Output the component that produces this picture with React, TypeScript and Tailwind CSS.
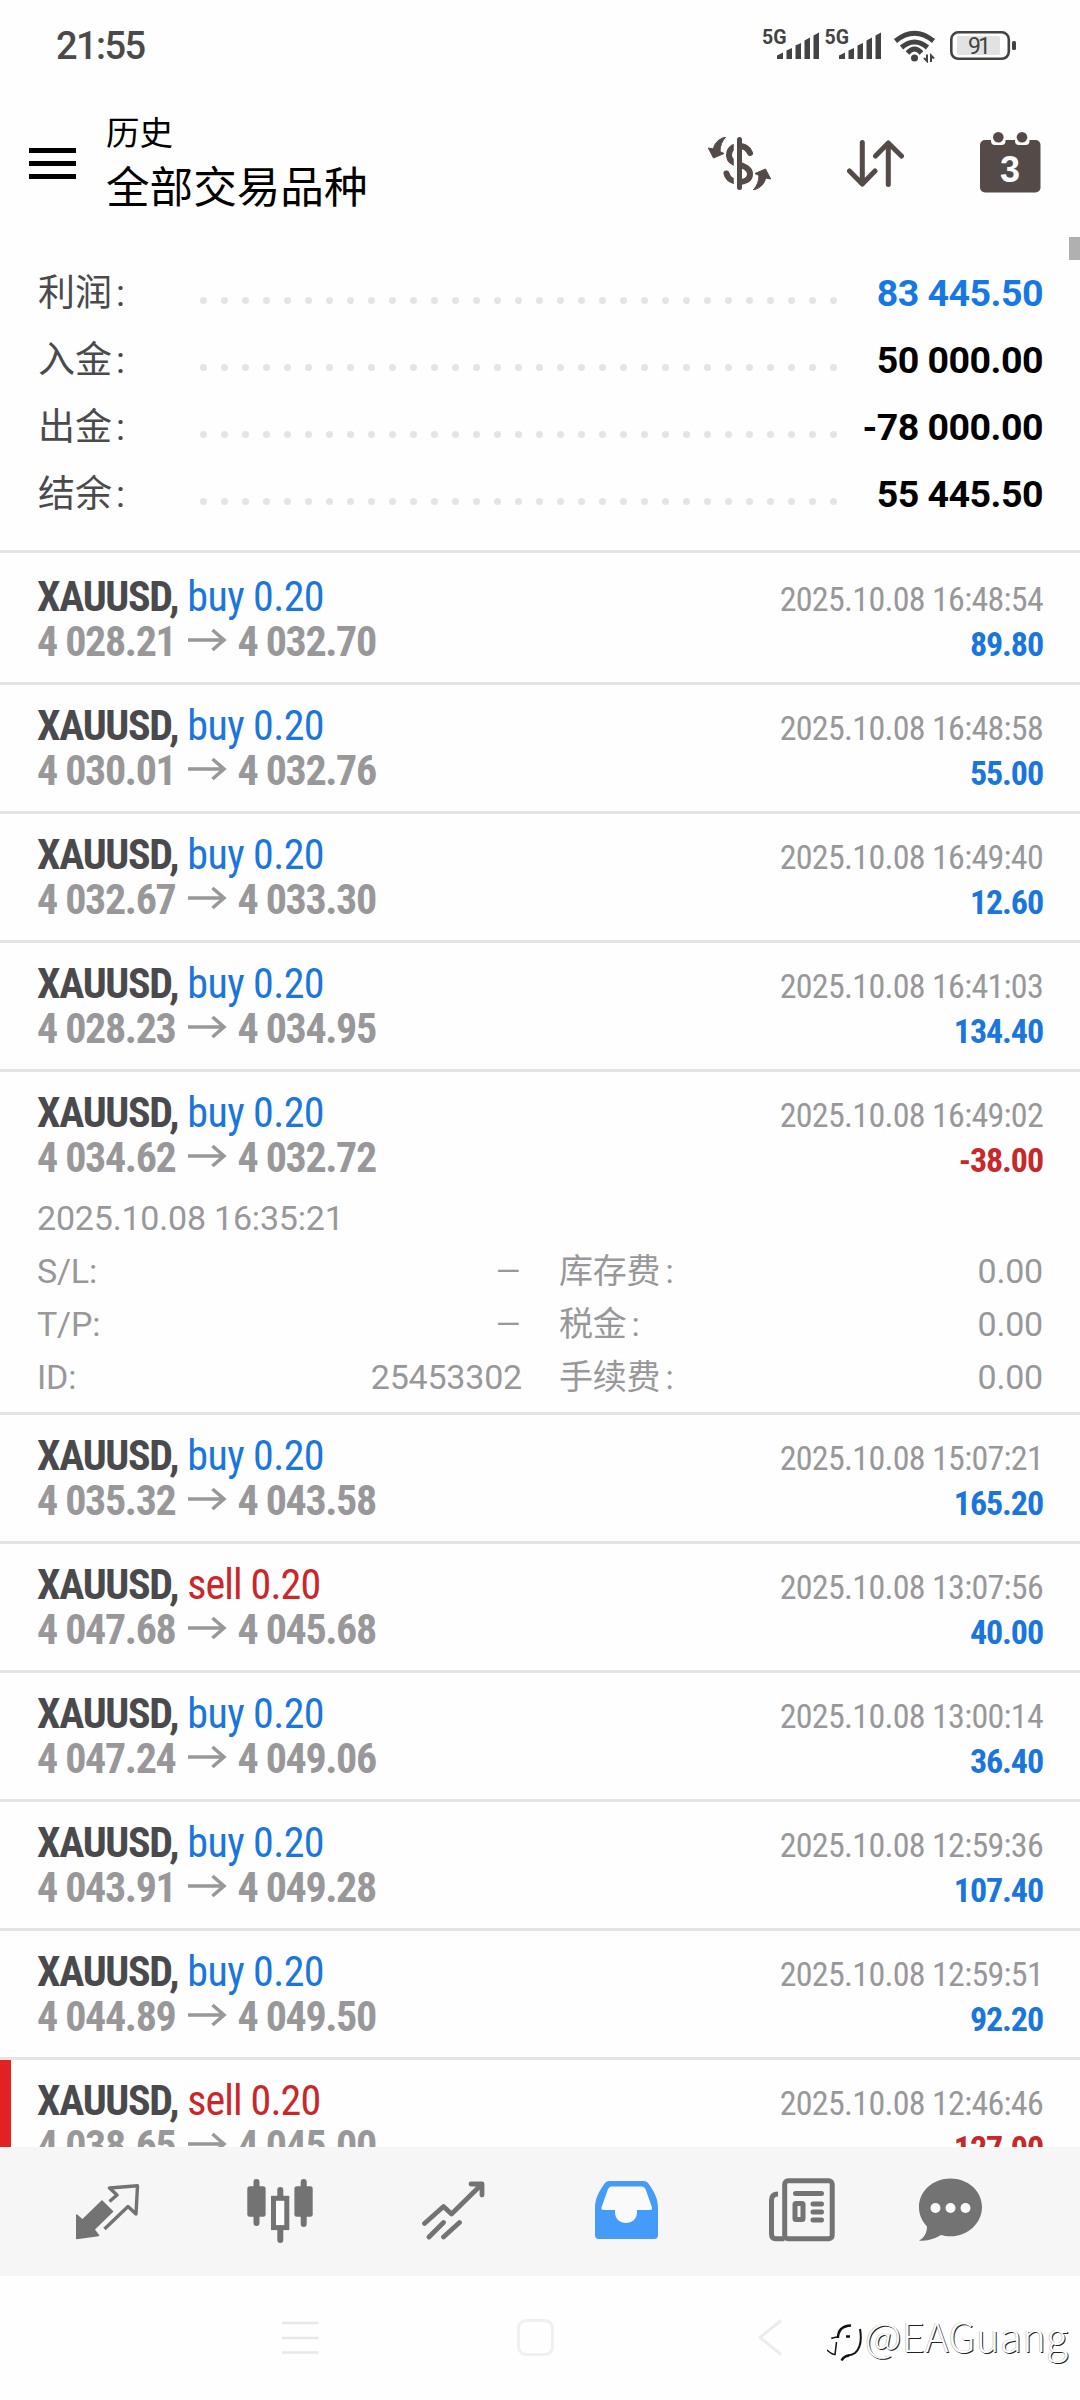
import React from 'react';

interface Deal {
  side: 'buy' | 'sell';
  open: string;
  close: string;
  time: string;
  profit: string;
  loss?: boolean;
  marked?: boolean;
  expanded?: boolean;
}

const deals: Deal[] = [
  { side: 'buy', open: '4 028.21', close: '4 032.70', time: '2025.10.08 16:48:54', profit: '89.80' },
  { side: 'buy', open: '4 030.01', close: '4 032.76', time: '2025.10.08 16:48:58', profit: '55.00' },
  { side: 'buy', open: '4 032.67', close: '4 033.30', time: '2025.10.08 16:49:40', profit: '12.60' },
  { side: 'buy', open: '4 028.23', close: '4 034.95', time: '2025.10.08 16:41:03', profit: '134.40' },
  { side: 'buy', open: '4 034.62', close: '4 032.72', time: '2025.10.08 16:49:02', profit: '-38.00', loss: true, expanded: true },
  { side: 'buy', open: '4 035.32', close: '4 043.58', time: '2025.10.08 15:07:21', profit: '165.20' },
  { side: 'sell', open: '4 047.68', close: '4 045.68', time: '2025.10.08 13:07:56', profit: '40.00' },
  { side: 'buy', open: '4 047.24', close: '4 049.06', time: '2025.10.08 13:00:14', profit: '36.40' },
  { side: 'buy', open: '4 043.91', close: '4 049.28', time: '2025.10.08 12:59:36', profit: '107.40' },
  { side: 'buy', open: '4 044.89', close: '4 049.50', time: '2025.10.08 12:59:51', profit: '92.20' },
  { side: 'sell', open: '4 038.65', close: '4 045.00', time: '2025.10.08 12:46:46', profit: '127.00', loss: true, marked: true },
];

const totals = [
  { label: '利润', value: '83 445.50', color: 'text-[#1678e2]' },
  { label: '入金', value: '50 000.00', color: 'text-black' },
  { label: '出金', value: '-78 000.00', color: 'text-black' },
  { label: '结余', value: '55 445.50', color: 'text-black' },
];

const details = [
  { label: 'S/L:', value: '–', label2: '库存费', value2: '0.00' },
  { label: 'T/P:', value: '–', label2: '税金', value2: '0.00' },
  { label: 'ID:', value: '25453302', label2: '手续费', value2: '0.00' },
];

const Signal = () => (
  <div className="flex items-start text-[#434343]">
    <span className="text-[19.500px] leading-[15px] font-bold">5G</span>
    <svg className="-ml-[10px]" width="42" height="32" viewBox="0 0 42 32" fill="currentColor">
      <path d="M0 29V25.500L6 22.500V29ZM9.500 29V20.500L15 18V29ZM18.500 29V15.500L24 13V29ZM27.500 29V10.500L33 7.500V29ZM36.500 29V5.500L42 2.500V29Z" />
    </svg>
  </div>
);

const StatusBar = () => (
  <div className="flex h-[90px] items-start justify-between pt-[30px] pr-[63px] pl-[56px]">
    <span className="h-8 text-[38px] leading-8 font-medium tracking-[-1.6px] text-[#4a4a4a]">21:55</span>
    <div className="flex items-start gap-[6px]">
      <Signal />
      <Signal />
      <svg className="ml-[6px]" width="44" height="33" viewBox="0 0 44 33" fill="none" stroke="#434343" strokeWidth="5">
        <path d="M2.500 11Q21.500-4.500 40.500 11" />
        <path d="M8.500 17.500Q21.500 6.500 34.500 17.500" />
        <path d="M14.500 23Q21.500 15 28.500 23" />
        <circle cx="21.500" cy="28" r="3.500" fill="#434343" stroke="none" />
        <path d="M34 24.500V31L31 28M38 32V25.500L41 28.500" strokeWidth="2" />
      </svg>
      <svg className="ml-[7px]" width="67" height="31" viewBox="0 0 67 31">
        <rect x="1.300" y="2.300" width="57.500" height="26.500" rx="7" fill="none" stroke="#434343" strokeWidth="2.600" />
        <rect x="7" y="6" width="43" height="19" rx="2" fill="#e2e2e2" />
        <rect x="62" y="11" width="4" height="9" rx="1.500" fill="#434343" />
        <text x="29.500" y="23.500" fontSize="23" fontWeight="400" textAnchor="middle" fill="#434343" textLength="23">91</text>
      </svg>
    </div>
  </div>
);

const Header = () => (
  <div className="flex h-[150px] items-start pl-[29px]">
    <div className="mt-[58px] flex w-[47px] flex-col gap-[8px]">
      <div className="h-[5px] bg-black" />
      <div className="h-[5px] bg-black" />
      <div className="h-[5px] bg-black" />
    </div>
    <div className="ml-[30px] flex-1 text-black">
      <div className="mt-[24px] text-[33.500px] leading-[40px]">历史</div>
      <div className="mt-[10px] text-[43.600px] leading-[50px]">全部交易品种</div>
    </div>
    <svg className="mt-[47px]" width="64" height="53" viewBox="0 0 64 53" fill="none" stroke="#544a48">
      <path d="M42 16C40 11 36 9 31 9C25 9 21 12.500 21 18C21 23.500 25 25.500 31 27.500C38 30 42 32 42 37C42 42.500 37 45 31 45C25 45 20 42 18.500 36.500" strokeWidth="6" strokeLinecap="round" />
      <path d="M27.500 2V51" stroke="#fefefe" strokeWidth="3.500" />
      <path d="M31.500 2.500V50.500" strokeWidth="5" strokeLinecap="round" />
      <path d="M17.700 0C10 2 6 7 5.500 12L.3 11L5.500 21L16 16.500L12 14.500C12 9 14 4 17.700 0Z" fill="#544a48" />
      <path d="M17.700 0C10 2 6 7 5.500 12L.3 11L5.500 21L16 16.500L12 14.500C12 9 14 4 17.700 0Z" fill="#544a48" transform="rotate(180 31.500 26.500)" />
    </svg>
    <svg className="mt-[50px] ml-[75px]" width="58" height="47" viewBox="0 0 58 47" fill="none" stroke="#544a48" strokeWidth="5" strokeLinecap="round" strokeLinejoin="round">
      <path d="M15.300 2.500V44M2.500 31L15.300 44L28 31" />
      <path d="M41.300 44.500V3M28.500 16L41.300 3L54.500 16" />
    </svg>
    <svg className="mt-[42px] mr-[39px] ml-[75px]" width="61" height="61" viewBox="0 0 61 61" fill="#544a48">
      <rect y="8" width="60.500" height="52.500" rx="5" />
      <path d="M11 5H25.500V9Q25.500 13 21.500 13H15Q11 13 11 9ZM35 5H49.500V9Q49.500 13 45.500 13H39Q35 13 35 9Z" fill="#fefefe" />
      <circle cx="18.300" cy="5.300" r="5.300" />
      <circle cx="42" cy="5.300" r="5.300" />
      <text x="30" y="49.500" fontSize="36" fontWeight="700" textAnchor="middle" fill="#fefefe" fontFamily="Liberation Sans, sans-serif">3</text>
    </svg>
  </div>
);

const Totals = () => (
  <div className="relative border-b-3 border-[#e4e4e4] pt-[20px] pr-[37px] pb-[22px] pl-[38px]">
    {/* scroll thumb */}
    <div className="absolute -top-[3px] right-0 h-[23px] w-[11px] bg-[#b0b0b0]" />
    {totals.map((t) => (
      <div key={t.label} className="flex h-[67px] items-center">
        <span className="w-[162px] text-[37px] text-[#4a4a4d]">
          {t.label}
          <span className="ml-[4px]">:</span>
        </span>
        <div className="flex gap-[14px] pt-[14px]">
          {Array.from({ length: 31 }, (_, i) => (
            <span key={i} className="size-[7px] rounded-full bg-[#e4e4e4]" />
          ))}
        </div>
        <span className={`ml-auto text-[37.500px] font-bold tracking-[-0.5px] ${t.color}`}>{t.value}</span>
      </div>
    ))}
  </div>
);

const DealDetails = () => (
  <div className="pt-[12px] text-[34px] leading-[53px] tracking-[-0.2px] text-[#98989a]">
    <div>2025.10.08 16:35:21</div>
    {details.map((d) => (
      <div key={d.label} className="flex h-[53px]">
        <span>{d.label}</span>
        <span className={`ml-auto ${d.value === '–' ? 'text-[42px] font-light' : ''}`}>{d.value}</span>
        <div className="ml-[37px] flex w-[484px] justify-between">
          <span>
            {d.label2}
            <span className="ml-[5px]">:</span>
          </span>
          <span>{d.value2}</span>
        </div>
      </div>
    ))}
  </div>
);

const DealRow: React.FC<{ deal: Deal }> = ({ deal }) => (
  <div
    className={`relative shrink-0 border-b-3 border-[#e4e4e4] px-[37px] pt-[18px] ${deal.expanded ? 'h-[343px]' : 'h-[129px]'}`}
  >
    {deal.marked && <div className="absolute inset-y-0 left-0 w-[11px] bg-[#e32022]" />}
    <div className="flex h-[45px] items-baseline justify-between font-['Roboto_Condensed',Roboto,sans-serif] leading-[45px] font-stretch-condensed">
      <span className="text-[42px] tracking-[-0.6px]">
        <b className="tracking-[-1.3px] text-[#4a4a4d]">XAUUSD,</b>{' '}
        <span className={deal.side === 'buy' ? 'text-[#1a76dc]' : 'tracking-[-0.9px] text-[#cb2629]'}>{deal.side} 0.20</span>
      </span>
      <span className="text-[34px] tracking-[-0.7px] text-[#98989a]">{deal.time}</span>
    </div>
    <div className="flex h-[45px] items-baseline justify-between font-['Roboto_Condensed',Roboto,sans-serif] leading-[45px] font-bold font-stretch-condensed">
      <span className="flex items-baseline text-[42px] tracking-[-1.35px] text-[#98989a]">
        {deal.open}
        <svg className="mr-[10px] ml-[12px]" width="40" height="33" viewBox="0 0 40 33" fill="none" stroke="#98989a" strokeWidth="3.500">
          <path d="M1 17H37M25.500 7L37 17L25.500 27" />
        </svg>
        {deal.close}
      </span>
      <span className={`text-[34px] tracking-[-1.1px] ${deal.loss ? 'text-[#c6282b]' : 'text-[#1a76dc]'}`}>{deal.profit}</span>
    </div>
    {deal.expanded && <DealDetails />}
  </div>
);

const TabBar = () => (
  <div className="flex h-[129px] shrink-0 items-start bg-[#f6f6f6]">
    <svg className="mt-[37px] ml-[76px]" width="64" height="56" viewBox="0 0 64 56" fill="#737373" stroke="#737373" strokeLinejoin="round">
      <path d="M.7 54.500V31L6.500 36L26 17L36.500 27.500L18 45.500L22.500 51.500Z" strokeWidth="1.500" />
      <path d="M33.500 17.500L41 11L33.500 4L61.500 1.800L60 30L52 22.500L28.500 45" fill="none" strokeWidth="3.400" />
    </svg>
    <svg className="mt-[31px] ml-[107px]" width="67" height="66" viewBox="0 0 67 66" fill="#737373" stroke="#737373" strokeWidth="6" strokeLinecap="round">
      <path d="M9.500 4V45M56.700 4V46M33.300 12V20M33.300 50V62" />
      <rect x=".3" y="8.300" width="18.300" height="30.500" rx="2.500" stroke="none" />
      <rect x="47.400" y="8.300" width="18.300" height="30.500" rx="2.500" stroke="none" />
      <rect x="26.500" y="20.300" width="13.300" height="29.300" fill="#fcfcfc" strokeWidth="5" />
    </svg>
    <svg className="mt-[34px] ml-[108px]" width="63" height="59" viewBox="0 0 63 59" fill="none" stroke="#737373" strokeWidth="4.800" strokeLinecap="round" strokeLinejoin="round">
      <path d="M2.500 42.500L21.500 25.500L29.500 33L59 4M49 3H60V14" />
      <path d="M21.500 41.500L7 56M37.500 41.500L21.500 56" />
    </svg>
    <svg className="mt-[34px] ml-[110px]" width="63" height="58" viewBox="0 0 63 58">
      <path d="M14 0H49Q52 0 53.500 2.500C59 11 63 17 63 27V54Q63 58 59 58H4Q0 58 0 54V27C0 17 4 11 9.500 2.500Q11 0 14 0Z" fill="#459cf8" />
      <path d="M16.500 5.500H47Q49.500 5.500 50.500 8L57 26.500Q57.500 29 55 29H42V31C42 38 37 42 31 42S20 38 20 31V29H8.500Q6 29 6.500 26.500L13 8Q14 5.500 16.500 5.500Z" fill="#fafafa" />
    </svg>
    <svg className="mt-[31px] ml-[111px]" width="66" height="64" viewBox="0 0 66 64" fill="none" stroke="#737373" strokeWidth="5" strokeLinecap="round">
      <path d="M15.500 60.800H6.500Q2.500 60.800 2.500 56V22Q2.500 16 9 16" strokeLinecap="butt" />
      <rect x="15.700" y="2.700" width="47.500" height="58" rx="3.500" />
      <path d="M26.500 15.500H52.500M44 26H52.500M44 34H52.500M44 42H52.500" />
      <rect x="26" y="25.500" width="8" height="16" rx="1" />
    </svg>
    <svg className="mt-[31px] ml-[84px]" width="64" height="64" viewBox="0 0 64 64" fill="#737373">
      <path d="M31.500.5C14 .5 0 13 0 29C0 37 3 43 8 48.500C8 55 5 60 0 62.500C9 63.500 17 60 22 57C25 58 28 58.300 31.500 58.300C49 58.300 63 45 63 29S49 .5 31.500 .5Z" />
      <g fill="#fcfcfc">
        <circle cx="16.500" cy="30" r="5" />
        <circle cx="31.500" cy="30" r="5" />
        <circle cx="46.500" cy="30" r="5" />
      </g>
    </svg>
  </div>
);

const SystemNav = () => (
  <div className="flex h-[124px] shrink-0 items-start">
    <svg className="mt-[43px] ml-[282px]" width="37" height="36" viewBox="0 0 37 36" stroke="#e8e8e8" strokeWidth="2.500">
      <path d="M0 4H36.500M0 19H36.500M0 33.500H36.500" />
    </svg>
    <div className="mt-[43px] ml-[198px] size-[37px] rounded-[9px] border-3 border-[#f0f0f0]" />
    <svg className="mt-[43px] ml-[204px]" width="24" height="37" viewBox="0 0 24 37" fill="none" stroke="#ececec" strokeWidth="3">
      <path d="M23 1.500L2 18.500L23 35.500" />
    </svg>
    <svg className="mt-[48px] ml-[45px]" width="36" height="38" viewBox="0 0 36 38" fill="none" stroke="#111">
      <path d="M0 26Q5 30.500 8 30.500L9.500 18M5 15V14L10 13" strokeWidth="1.500" />
      <path d="M11 14Q11 2 24 1.500M19 12.500H23M14.500 36.500Q17 32 22 31.500" strokeWidth="2.400" />
      <path d="M33 5Q36 22 28 29Q25 31 21 31.500" strokeWidth="2" />
    </svg>
    <span className="ml-[2px] pt-[33px] font-['Noto_Sans_CJK_SC',sans-serif] text-[40px] leading-[52px] font-light tracking-[0.4px] text-[#fefefe] [text-shadow:1px_1px_0.5px_#222,-0.5px_-0.5px_0.5px_#aaa]">@EAGuang</span>
  </div>
);

const App: React.FC = () => {
  return (
    <div className="flex h-[2400px] w-[1080px] flex-col overflow-hidden bg-[#fefefe] font-[Roboto,'Noto_Sans_CJK_SC',sans-serif]">
      <StatusBar />
      <Header />
      <Totals />
      <div className="flex min-h-0 flex-1 flex-col overflow-hidden pt-[3px]">
        {deals.map((deal) => (
          <DealRow key={deal.time} deal={deal} />
        ))}
      </div>
      <TabBar />
      <SystemNav />
    </div>
  );
};

export default App;
